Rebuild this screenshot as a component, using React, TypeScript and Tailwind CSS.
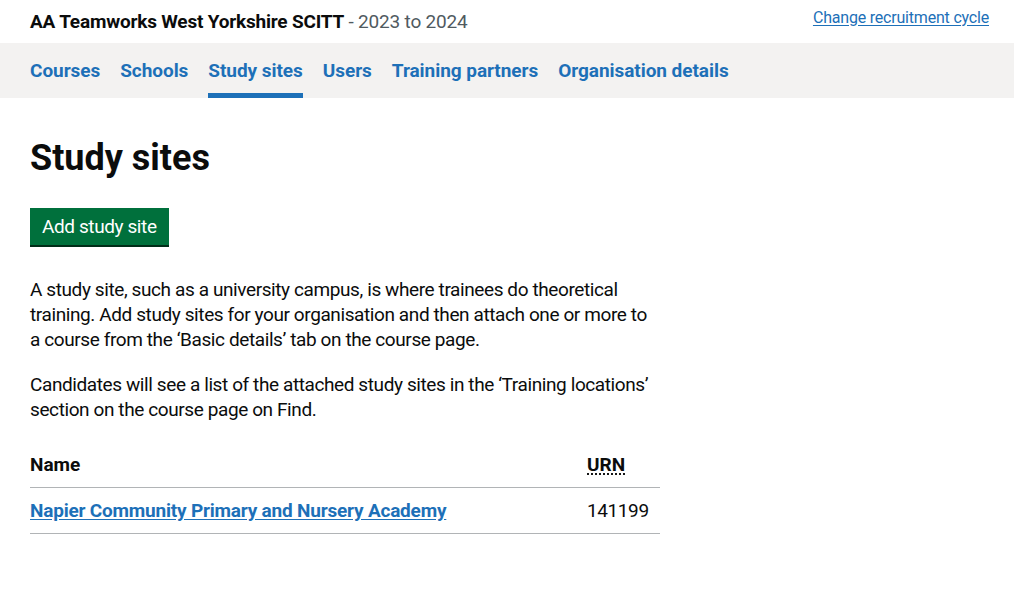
import React from "react";

const navItems = [
  { label: "Courses", active: false },
  { label: "Schools", active: false },
  { label: "Study sites", active: true },
  { label: "Users", active: false },
  { label: "Training partners", active: false },
  { label: "Organisation details", active: false },
];

const sites = [{ name: "Napier Community Primary and Nursery Academy", urn: "141199" }];

export default function App() {
  return (
    <div
      className="min-h-[593px] bg-white text-[#0b0c0c]"
      style={{ fontFamily: "Roboto, 'Liberation Sans', Arial, sans-serif" }}
    >
      {/* org header */}
      <header className="flex h-[43px] items-center justify-between pl-[30px] pr-[25px]">
        <div className="text-[19px] leading-[25px]">
          <span className="font-bold tracking-[-0.2px]">AA Teamworks West Yorkshire SCITT</span>
          <span className="tracking-[-0.2px] text-[#505a5f]"> - 2023 to 2024</span>
        </div>
        <a
          href="#"
          className="mb-[8px] text-[16px] leading-[20px] tracking-[-0.2px] text-[#1d70b8] underline underline-offset-2"
        >
          Change recruitment cycle
        </a>
      </header>

      {/* primary nav */}
      <nav className="h-[55px] bg-[#f3f2f1] pl-[30px]">
        <ul className="flex h-full gap-[20px]">
          {navItems.map((item) => (
            <li
              key={item.label}
              className={
                "flex h-full items-center border-b-[5px] pt-[5px] " +
                (item.active ? "border-[#1d70b8]" : "border-transparent")
              }
            >
              <a href="#" className="text-[19px] font-bold leading-[25px] tracking-[-0.05px] text-[#1d70b8]">
                {item.label}
              </a>
            </li>
          ))}
        </ul>
      </nav>

      <main className="px-[30px] pt-[40px]">
        <h1 className="mb-[30px] text-[36px] font-bold leading-[40px]">Study sites</h1>

        <button className="mb-[32px] h-[37px] bg-[#00703c] px-[12px] text-[19px] leading-[25px] tracking-[-0.4px] text-white shadow-[0_2px_0_#002d18]">
          Add study site
        </button>

        <div className="text-[19px] leading-[25px] tracking-[-0.4px]">
          <div className="w-[626px]">
            <p className="mb-[20px]">
              A study site, such as a university campus, is where trainees do theoretical training. Add study sites
              for your organisation and then attach one or more to a course from the ‘Basic details’ tab on the
              course page.
            </p>
            <p className="mb-[20px]">
              Candidates will see a list of the attached study sites in the ‘Training locations’ section on the
              course page on Find.
            </p>
          </div>

          <table className="w-[630px] border-collapse text-left">
            <thead>
              <tr className="border-b border-[#b1b4b6]">
                <th className="py-[10px] pr-[20px] font-bold tracking-[0px]">Name</th>
                <th className="w-[73px] py-[10px] font-bold tracking-[0px]">
                  <abbr title="Unique reference number" className="underline decoration-dotted underline-offset-[3px]">
                    URN
                  </abbr>
                </th>
              </tr>
            </thead>
            <tbody>
              {sites.map((s) => (
                <tr key={s.urn} className="border-b border-[#b1b4b6]">
                  <td className="py-[10px] pr-[20px]">
                    <a href="#" className="font-bold tracking-[-0.2px] text-[#1d70b8] underline underline-offset-2">
                      {s.name}
                    </a>
                  </td>
                  <td className="py-[10px]">{s.urn}</td>
                </tr>
              ))}
            </tbody>
          </table>
        </div>
      </main>
    </div>
  );
}
